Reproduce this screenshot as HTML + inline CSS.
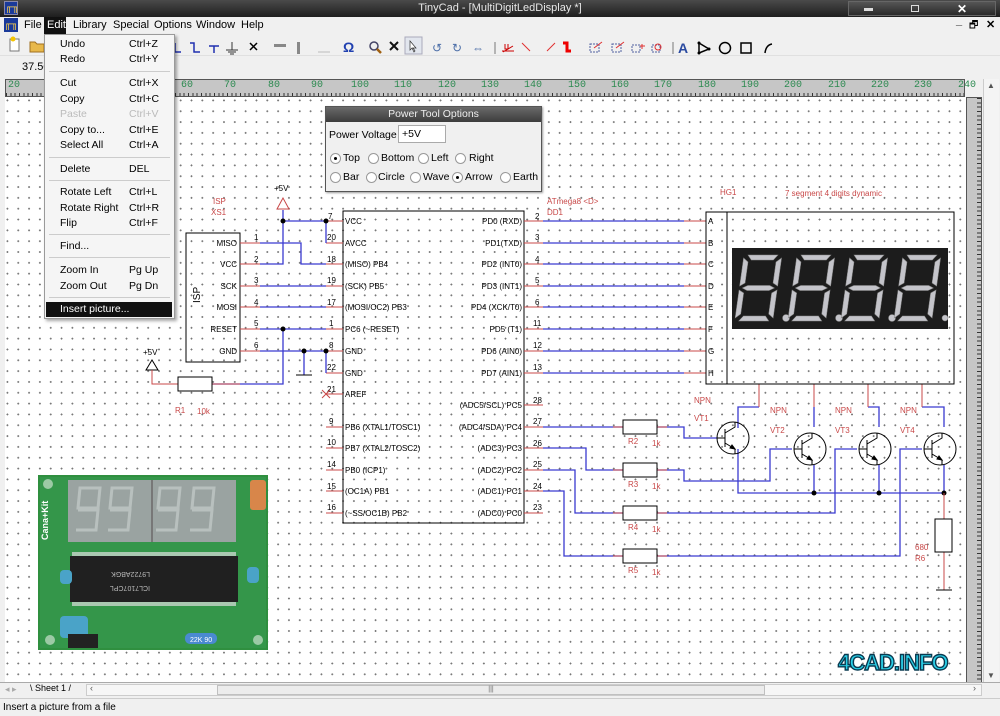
<!DOCTYPE html>
<html><head><meta charset="utf-8">
<style>
*{margin:0;padding:0;box-sizing:border-box}
body{width:1000px;height:716px;overflow:hidden;background:#f0f0f0;font-family:"Liberation Sans",sans-serif;font-size:11px;color:#000;position:relative}
.abs{position:absolute}
#title{left:0;top:0;width:1000px;height:17px;background:linear-gradient(#4a4a4a,#1e1e1e);color:#e8e8e8;text-align:center;font-size:11px;line-height:17px}
#menubar{left:0;top:17px;width:1000px;height:17px;background:#f0f0f0}
#menubar span{position:absolute;top:2px}
#toolbar{left:0;top:34px;width:1000px;height:22px;background:#f0f0f0;border-bottom:1px solid #e0e0e0}
#row2{left:0;top:56px;width:1000px;height:22px;background:#f0f0f0}
#ruler{left:5px;top:79px;width:960px;height:18px;background:#c6c6c6;border:1px solid #555;
 background-image:repeating-linear-gradient(90deg,#333 0 1px,transparent 1px 4.333px);background-size:100% 4px;background-repeat:no-repeat;background-position:0 13px}
#ruler i{position:absolute;top:0;font-style:normal;color:#2c8a50;font-size:10px;font-family:"Liberation Mono",monospace}
#vruler{left:966px;top:97px;width:16px;height:588px;background:#c6c6c6;border:1px solid #555;
 background-image:repeating-linear-gradient(180deg,#333 0 1px,transparent 1px 4.333px);background-size:5px 100%;background-repeat:no-repeat;background-position:10px 0}
#vscroll{left:983px;top:79px;width:16px;height:606px;background:#f4f4f4;border-left:1px solid #ccc}
#canvas{left:5px;top:97px;width:961px;height:585px;background-color:#fff;
 background-image:radial-gradient(circle,#777 0.8px,transparent 1px);background-size:10.833px 10.833px;background-position:-3px -2px}
#tabs{left:0;top:682px;width:1000px;height:15px;background:#f0f0f0;border-top:1px solid #aaa}
#status{left:0;top:698px;width:1000px;height:18px;background:#f0f0f0;border-top:1px solid #ccc;font-size:10px;line-height:17px;padding-left:3px}
#menu{left:44px;top:34px;width:131px;height:285px;background:#f5f5f5;border:1px solid #9a9a9a;box-shadow:2px 2px 3px rgba(0,0,0,.35)}
#menu div{position:absolute;left:15px;font-size:10.5px}
#menu b{position:absolute;left:84px;font-weight:normal;font-size:10.5px}
#menu hr{position:absolute;left:4px;width:121px;border:0;border-top:1px solid #ccc}
#dlg{left:325px;top:106px;width:217px;height:86px;background:#f0f0f0;border:1px solid #555;box-shadow:1px 1px 2px rgba(0,0,0,.4)}
#dlg .t{height:15px;background:linear-gradient(#6a6a6a,#3c3c3c);color:#eee;text-align:center;line-height:15px;font-size:10.5px}
.rb{position:absolute;width:11px;height:11px;border:1px solid #999;border-radius:50%;background:#fff}
.rb.on::after{content:"";position:absolute;left:3px;top:3px;width:3px;height:3px;background:#000;border-radius:50%}
.dl{position:absolute;font-size:10.5px}
svg text{font-family:"Liberation Sans",sans-serif}
</style></head><body>

<div id="title" class="abs">TinyCad - [MultiDigitLedDisplay *]
 <div class="abs" style="left:4px;top:1px;width:14px;height:14px;background:#1a3a9a;border:1px solid #88a;color:#ffd24a;font-size:10px;line-height:12px;font-weight:bold">╓╖</div>
 <div class="abs" style="left:848px;top:1px;width:148px;height:15px;border:1px solid #666;background:linear-gradient(#555,#2a2a2a)">
  <span class="abs" style="left:15px;top:6px;width:9px;height:3px;background:#ddd"></span>
  <span class="abs" style="left:62px;top:3px;width:8px;height:7px;border:1px solid #ddd"></span>
  <span class="abs" style="left:108px;top:-1px;color:#fff;font-weight:bold;font-size:12px">✕</span>
 </div>
</div>

<div id="menubar" class="abs">
 <div class="abs" style="left:4px;top:1px;width:14px;height:14px;background:#1a3a9a;color:#ffd24a;font-size:10px;line-height:13px;font-weight:bold;text-align:center">╓╖</div>
 <span style="left:24px">File</span>
 <span style="left:44px;top:0;width:22px;height:17px;background:#111;color:#fff;padding:2px 0 0 3px">Edit</span>
 <span style="left:73px">Library</span><span style="left:113px">Special</span><span style="left:154px">Options</span><span style="left:196px">Window</span><span style="left:241px">Help</span>
 <span style="left:956px;top:-2px;font-weight:bold">_</span>
 <span style="left:969px;top:1px;font-size:10px">🗗</span>
 <span style="left:986px;top:1px;font-weight:bold">✕</span>
</div>

<div id="toolbar" class="abs">
 <svg width="1000" height="22" style="position:absolute;left:0;top:0">
  <rect x="10" y="5" width="9" height="12" fill="#fff" stroke="#777"/><circle cx="13" cy="5" r="2.5" fill="#f5c400"/>
  <path d="M30 8h5l2 2h7v8h-14z" fill="#e8b84a" stroke="#a07020"/>
  <g stroke="#2030b0" stroke-width="1.5" fill="none">
   <path d="M175 9v9h6"/><path d="M190 9h4v9h6"/><path d="M209 12h10M214 12v7"/>
  </g>
  <path d="M232 8v8M226 16h12M228 18h8M230 20h4" stroke="#333" fill="none"/>
  <path d="M250 9l7 7M257 9l-7 7" stroke="#000" stroke-width="1.5"/>
  <rect x="274" y="10" width="12" height="3" fill="#888"/><rect x="297" y="8" width="3" height="12" fill="#888"/>
  <path d="M318 18h12" stroke="#bbb"/>
  <text x="343" y="18" font-size="14" font-weight="bold" fill="#2040b0">Ω</text>
  <circle cx="374" cy="12" r="4" fill="none" stroke="#446" stroke-width="1.5"/><path d="M377 15l4 4" stroke="#a06010" stroke-width="2.5"/>
  <path d="M390 8l8 8M398 8l-8 8" stroke="#111" stroke-width="2"/>
  <rect x="405" y="3" width="17" height="17" fill="#e2e6ee" stroke="#aab"/><path d="M410 7v9l2-2 2 4 1-1-2-3h3z" fill="#fff" stroke="#333" stroke-width=".7"/>
  <text x="432" y="18" font-size="12" fill="#4d6fa8">↺</text><text x="452" y="18" font-size="12" fill="#4d6fa8">↻</text><text x="472" y="18" font-size="12" fill="#4d6fa8">⇔</text>
  <path d="M495 8v12" stroke="#777"/>
  <path d="M502 17h12M505 10v5h3v-5" stroke="#c00" fill="none"/><path d="M503 18l10-6" stroke="#c00"/>
  <path d="M522 9l8 8M547 17l8-8" stroke="#e03030"/>
  <path d="M563 9h4v8h4" stroke="#e00" stroke-width="3" fill="none"/>
  <g stroke="#5060a0" fill="none" stroke-dasharray="2 1"><rect x="590" y="10" width="9" height="8"/><rect x="612" y="10" width="9" height="8"/><rect x="632" y="11" width="8" height="7"/><rect x="652" y="11" width="8" height="7"/></g>
  <path d="M594 14l8-6M616 14l8-6M640 12h5M642 10v5" stroke="#e03030"/><circle cx="658" cy="13" r="3" fill="none" stroke="#e03030"/>
  <path d="M673 8v12" stroke="#777"/>
  <text x="678" y="19" font-size="14" font-weight="bold" fill="#2a4aa0" font-family="Liberation Serif">A</text>
  <path d="M699 9l10 6-10 4z" fill="none" stroke="#000" stroke-width="1.5"/><circle cx="699" cy="9" r="1.5"/><circle cx="709" cy="15" r="1.5"/><circle cx="699" cy="19" r="1.5"/>
  <circle cx="725" cy="14" r="5.5" fill="none" stroke="#000" stroke-width="1.5"/>
  <rect x="741" y="9" width="10" height="10" fill="none" stroke="#000" stroke-width="1.5"/>
  <path d="M765 19q1-8 7-9" stroke="#000" stroke-width="1.5" fill="none"/>
 </svg>
</div>

<div id="row2" class="abs"><span class="abs" style="left:22px;top:5px;font-size:11px">37.50</span></div>

<div id="ruler" class="abs">
 <i style="left:2px">20</i><i style="left:45px">30</i><i style="left:88px">40</i><i style="left:132px">50</i><i style="left:175px">60</i><i style="left:218px">70</i><i style="left:262px">80</i><i style="left:305px">90</i><i style="left:345px">100</i><i style="left:388px">110</i><i style="left:432px">120</i><i style="left:475px">130</i><i style="left:518px">140</i><i style="left:562px">150</i><i style="left:605px">160</i><i style="left:648px">170</i><i style="left:692px">180</i><i style="left:735px">190</i><i style="left:778px">200</i><i style="left:822px">210</i><i style="left:865px">220</i><i style="left:908px">230</i><i style="left:952px">240</i>
</div>
<div id="vruler" class="abs"></div>
<div id="vscroll" class="abs"><span class="abs" style="left:3px;top:2px;font-size:8px;color:#555">▲</span><span class="abs" style="left:3px;top:592px;font-size:8px;color:#555">▼</span></div>

<div id="canvas" class="abs"></div>

<svg class="abs" style="left:0;top:0" width="1000" height="716">
 <g>
  <rect x="38" y="475" width="230" height="175" fill="#2f8f3f"/>
  <rect x="40" y="477" width="226" height="171" fill="#34964a"/>
  <rect x="68" y="480" width="168" height="62" fill="#9aa3a1"/>
  <path d="M152 480v62" stroke="#777" stroke-width="2"/>
  <g fill="none" stroke="#b8c0be" stroke-width="3">
   <path d="M80 488h20l-2 20h-20zM78 510h20l-2 20h-20"/><path d="M112 488h20l-2 20h-20zM110 510h20l-2 20h-20"/>
   <path d="M160 488h20l-2 20h-20zM158 510h20l-2 20h-20"/><path d="M194 488h20l-2 20h-20zM192 510h20l-2 20h-20"/>
  </g>
  <rect x="70" y="556" width="168" height="46" fill="#202020"/>
  <g fill="#ddd"><rect x="72" y="552" width="164" height="4" opacity=".7"/><rect x="72" y="602" width="164" height="4" opacity=".7"/></g>
  <text x="150" y="576" font-size="7" fill="#bbb" transform="rotate(180 150 574)">L9722ABGK</text>
  <text x="150" y="590" font-size="7" fill="#bbb" transform="rotate(180 150 588)">ICL7107CPL</text>
  <rect x="250" y="480" width="16" height="30" rx="3" fill="#d8864a"/>
  <rect x="60" y="570" width="12" height="14" rx="4" fill="#4aa3c8"/><rect x="247" y="567" width="12" height="16" rx="4" fill="#4aa3c8"/>
  <rect x="60" y="616" width="28" height="22" rx="4" fill="#4aa3c8"/><rect x="68" y="634" width="30" height="14" fill="#222"/>
  <rect x="185" y="633" width="32" height="11" rx="5" fill="#4a8ad0"/><text x="190" y="642" font-size="7" fill="#fff">22K 90</text>
  <text x="48" y="540" font-size="9" font-weight="bold" fill="#fff" transform="rotate(-90 48 540)">Cana+Kit</text>
  <circle cx="48" cy="484" r="5" fill="#9ccaa5"/><circle cx="258" cy="640" r="5" fill="#9ccaa5"/><circle cx="50" cy="640" r="5" fill="#9ccaa5"/>
 </g>

 <g font-size="8">
  <rect x="186" y="233" width="54" height="129" fill="none" stroke="#000"/>
  <text x="198" y="305" font-size="10" transform="rotate(-90 198 303)">ISP</text>
  <g text-anchor="end">
   <text x="237" y="246">MISO</text><text x="237" y="267">VCC</text><text x="237" y="289">SCK</text><text x="237" y="310">MOSI</text><text x="237" y="332">RESET</text><text x="237" y="354">GND</text>
  </g>
  <g stroke="#c84848"><path d="M240 243h20M240 264h20M240 286h20M240 307h20M240 329h20M240 351h20"/></g>
  <g><text x="254" y="240">1</text><text x="254" y="262">2</text><text x="254" y="283">3</text><text x="254" y="305">4</text><text x="254" y="326">5</text><text x="254" y="348">6</text></g>
  <text x="213" y="204" fill="#c84848">ISP</text><text x="211" y="215" fill="#c84848">XS1</text>

  <rect x="343" y="211" width="181" height="312" fill="none" stroke="#000"/>
  <g stroke="#c84848">
   <path d="M326 221h17M326 243h17M326 264h17M326 286h17M326 307h17M326 329h17M326 351h17M326 373h17M326 394h17M326 427h17M326 448h17M326 470h17M326 491h17M326 513h17"/>
   <path d="M524 221h19M524 243h19M524 264h19M524 286h19M524 307h19M524 329h19M524 351h19M524 373h19M524 405h19M524 427h19M524 448h19M524 470h19M524 491h19M524 513h19"/>
  </g>
  <g>
   <text x="328" y="219">7</text><text x="327" y="240">20</text><text x="327" y="262">18</text><text x="327" y="283">19</text><text x="327" y="305">17</text><text x="329" y="326">1</text><text x="329" y="348">8</text><text x="327" y="370">22</text><text x="327" y="392">21</text><text x="329" y="424">9</text><text x="327" y="445">10</text><text x="327" y="467">14</text><text x="327" y="489">15</text><text x="327" y="510">16</text>
   <text x="535" y="219">2</text><text x="535" y="240">3</text><text x="535" y="262">4</text><text x="535" y="283">5</text><text x="535" y="305">6</text><text x="533" y="326">11</text><text x="533" y="348">12</text><text x="533" y="370">13</text><text x="533" y="403">28</text><text x="533" y="424">27</text><text x="533" y="446">26</text><text x="533" y="467">25</text><text x="533" y="489">24</text><text x="533" y="510">23</text>
  </g>
  <g>
   <text x="345" y="224">VCC</text><text x="345" y="246">AVCC</text><text x="345" y="267">(MISO) PB4</text><text x="345" y="289">(SCK) PB5</text><text x="345" y="310">(MOSI/OC2) PB3</text><text x="345" y="332">PC6 (~RESET)</text><text x="345" y="354">GND</text><text x="345" y="376">GND</text><text x="345" y="397">AREF</text><text x="345" y="430">PB6 (XTAL1/TOSC1)</text><text x="345" y="451">PB7 (XTAL2/TOSC2)</text><text x="345" y="473">PB0 (ICP1)</text><text x="345" y="494">(OC1A) PB1</text><text x="345" y="516">(~SS/OC1B) PB2</text>
  </g>
  <g text-anchor="end">
   <text x="522" y="224">PD0 (RXD)</text><text x="522" y="246">PD1(TXD)</text><text x="522" y="267">PD2 (INT0)</text><text x="522" y="289">PD3 (INT1)</text><text x="522" y="310">PD4 (XCK/T0)</text><text x="522" y="332">PD5 (T1)</text><text x="522" y="354">PD6 (AIN0)</text><text x="522" y="376">PD7 (AIN1)</text><text x="522" y="408">(ADC5/SCL) PC5</text><text x="522" y="430">(ADC4/SDA) PC4</text><text x="522" y="451">(ADC3) PC3</text><text x="522" y="473">(ADC2) PC2</text><text x="522" y="494">(ADC1) PC1</text><text x="522" y="516">(ADC0) PC0</text>
  </g>
  <text x="547" y="204" fill="#c84848">ATmega8 &lt;D&gt;</text><text x="547" y="215" fill="#c84848">DD1</text>
  <path d="M322 390l8 8M330 390l-8 8" stroke="#c84848"/>

  <text x="274" y="191">+5V</text><path d="M283 198l-6 11h12z" fill="#fff" stroke="#c84848"/>
  <text x="143" y="355">+5V</text><path d="M152 360l-6 10h12z" fill="#fff" stroke="#000"/>
  <g stroke="#3a3ad0" fill="none" stroke-width="1.3">
   <path d="M283 210v54h-23M283 221h43v22"/>
   <path d="M260 243h41v21h25"/>
   <path d="M260 286h66M260 307h66M260 329h66M283 329v55h-71"/>
   <path d="M260 351h66v22M304 351v24"/>
   <path d="M543 221h141M543 243h141M543 264h141M543 286h141M543 307h141M543 329h141M543 351h141M543 373h141"/>
   <path d="M543 427h80M543 448h43v22h37M543 470h32v43h48M543 491h21v65h59"/>
   <path d="M657 427h27v11h33M657 470h27v11h86v-32h22M657 513h178v-64h22M657 556h243v-107h22"/>
   <path d="M738 428v-21h21M814 407v20M868 407h11v20M922 407h22v20"/>
   <path d="M738 449v44h206M814 465v28M879 465v28M944 465v28"/>
  </g>
  <path d="M152 370v14h26M212 384h28" stroke="#c84848" fill="none"/>
  <rect x="178" y="377" width="34" height="14" fill="#fff" stroke="#000"/>
  <text x="175" y="413" fill="#c84848">R1</text><text x="197" y="414" fill="#c84848">10k</text>
  <path d="M296 375h16" stroke="#000"/>
  <g fill="#000"><circle cx="283" cy="221" r="2.5"/><circle cx="326" cy="221" r="2.5"/><circle cx="283" cy="329" r="2.5"/><circle cx="304" cy="351" r="2.5"/><circle cx="326" cy="351" r="2.5"/><circle cx="814" cy="493" r="2.5"/><circle cx="879" cy="493" r="2.5"/><circle cx="944" cy="493" r="2.5"/></g>

  <g stroke="#c84848"><path d="M684 221h22M684 243h22M684 264h22M684 286h22M684 307h22M684 329h22M684 351h22M684 373h22"/>
  <path d="M759 384v23M814 384v23M868 384v23M922 384v23"/><path d="M944 493v26M944 552v38"/></g>
  <rect x="706" y="212" width="248" height="172" fill="none" stroke="#000"/>
  <path d="M727 212v172" stroke="#000"/>
  <g><text x="708" y="224">A</text><text x="708" y="246">B</text><text x="708" y="267">C</text><text x="708" y="289">D</text><text x="708" y="310">E</text><text x="708" y="332">F</text><text x="708" y="354">G</text><text x="708" y="376">H</text></g>
  <text x="720" y="195" fill="#c84848">HG1</text><text x="785" y="196" fill="#c84848">7 segment 4 digits dynamic</text>
  <rect x="732" y="248" width="216" height="81" fill="#1c1c1c"/>
  <g fill="#c4c4ca" stroke="#888" stroke-width=".5">
   <g id="dg" transform="translate(744 255) skewX(-8)">
    <polygon points="4,0 34,0 30,5 8,5"/>
    <polygon points="0,3 5,7 5,28 0,31"/>
    <polygon points="38,3 33,7 33,28 38,31"/>
    <polygon points="3,33 8,30.5 30,30.5 35,33 30,35.5 8,35.5"/>
    <polygon points="0,35 5,38 5,59 0,63"/>
    <polygon points="38,35 33,38 33,59 38,63"/>
    <polygon points="8,61 30,61 34,66 4,66"/>
   </g>
   <circle cx="786" cy="318" r="3.5"/>
   <use href="#dg" x="53"/><circle cx="839" cy="318" r="3.5"/>
   <use href="#dg" x="106"/><circle cx="892" cy="318" r="3.5"/>
   <use href="#dg" x="159"/><circle cx="945" cy="318" r="3"/>
  </g>

  <g stroke="#c84848"><path d="M613 427h10M657 427h10M613 470h10M657 470h10M613 513h10M657 513h10M613 556h10M657 556h10"/></g>
  <g fill="#fff" stroke="#000"><rect x="623" y="420" width="34" height="14"/><rect x="623" y="463" width="34" height="14"/><rect x="623" y="506" width="34" height="14"/><rect x="623" y="549" width="34" height="14"/><rect x="935" y="519" width="17" height="33"/></g>
  <g fill="#c84848"><text x="628" y="444">R2</text><text x="652" y="446">1k</text><text x="628" y="487">R3</text><text x="652" y="489">1k</text><text x="628" y="530">R4</text><text x="652" y="532">1k</text><text x="628" y="573">R5</text><text x="652" y="575">1k</text><text x="915" y="550">680</text><text x="915" y="561">R6</text>
   <text x="694" y="403">NPN</text><text x="694" y="421">VT1</text><text x="770" y="413">NPN</text><text x="770" y="433">VT2</text><text x="835" y="413">NPN</text><text x="835" y="433">VT3</text><text x="900" y="413">NPN</text><text x="900" y="433">VT4</text></g>
  <path d="M936 590h16" stroke="#000"/>
  <g fill="none" stroke="#000">
   <g id="tr"><circle cx="733" cy="438" r="16"/><path d="M725 429v18M717 438h8M725 433l10-6v-5M725 443l10 6v5"/><path d="M735 449l-5-1 2-3z" fill="#000"/></g>
   <use href="#tr" x="77" y="11"/><use href="#tr" x="142" y="11"/><use href="#tr" x="207" y="11"/>
  </g>
 </g>

 <text x="838" y="670" font-size="22" font-weight="bold" fill="#2bd0e8" stroke="#0a3a50" stroke-width="1.4" letter-spacing="-1" font-family="Liberation Sans">4CAD.INFO</text>
</svg>

<div id="dlg" class="abs">
 <div class="t">Power Tool Options</div>
 <span class="dl" style="left:3px;top:22px">Power Voltage</span>
 <div class="abs" style="left:72px;top:18px;width:48px;height:18px;background:#fff;border:1px solid #aaa;padding:2px 3px;font-size:10.5px">+5V</div>
 <span class="rb on" style="left:4px;top:46px"></span><span class="dl" style="left:17px;top:45px">Top</span>
 <span class="rb" style="left:42px;top:46px"></span><span class="dl" style="left:55px;top:45px">Bottom</span>
 <span class="rb" style="left:92px;top:46px"></span><span class="dl" style="left:105px;top:45px">Left</span>
 <span class="rb" style="left:129px;top:46px"></span><span class="dl" style="left:143px;top:45px">Right</span>
 <span class="rb" style="left:4px;top:65px"></span><span class="dl" style="left:17px;top:64px">Bar</span>
 <span class="rb" style="left:40px;top:65px"></span><span class="dl" style="left:52px;top:64px">Circle</span>
 <span class="rb" style="left:84px;top:65px"></span><span class="dl" style="left:97px;top:64px">Wave</span>
 <span class="rb on" style="left:126px;top:65px"></span><span class="dl" style="left:139px;top:64px">Arrow</span>
 <span class="rb" style="left:174px;top:65px"></span><span class="dl" style="left:187px;top:64px">Earth</span>
</div>

<div id="menu" class="abs">
 <div style="top:3px">Undo</div><b style="top:3px">Ctrl+Z</b>
 <div style="top:18px">Redo</div><b style="top:18px">Ctrl+Y</b>
 <hr style="top:36px">
 <div style="top:42px">Cut</div><b style="top:42px">Ctrl+X</b>
 <div style="top:58px">Copy</div><b style="top:58px">Ctrl+C</b>
 <div style="top:73px;color:#bbb">Paste</div><b style="top:73px;color:#bbb">Ctrl+V</b>
 <div style="top:89px">Copy to...</div><b style="top:89px">Ctrl+E</b>
 <div style="top:104px">Select All</div><b style="top:104px">Ctrl+A</b>
 <hr style="top:122px">
 <div style="top:128px">Delete</div><b style="top:128px">DEL</b>
 <hr style="top:145px">
 <div style="top:151px">Rotate Left</div><b style="top:151px">Ctrl+L</b>
 <div style="top:167px">Rotate Right</div><b style="top:167px">Ctrl+R</b>
 <div style="top:182px">Flip</div><b style="top:182px">Ctrl+F</b>
 <hr style="top:199px">
 <div style="top:205px">Find...</div>
 <hr style="top:222px">
 <div style="top:229px">Zoom In</div><b style="top:229px">Pg Up</b>
 <div style="top:245px">Zoom Out</div><b style="top:245px">Pg Dn</b>
 <hr style="top:262px">
 <span class="abs" style="left:1px;top:267px;width:126px;height:15px;background:#111"></span>
 <div style="top:268px;color:#fff">Insert picture...</div>
</div>

<div id="tabs" class="abs">
 <span class="abs" style="left:5px;top:1px;color:#aaa;font-size:9px">◂ ▸</span>
 <span class="abs" style="left:30px;top:0;font-size:9px">\ Sheet 1 /</span>
 <div class="abs" style="left:86px;top:1px;width:896px;height:12px;background:#f6f6f6;border:1px solid #ccc">
  <span class="abs" style="left:3px;top:-2px;font-size:9px;color:#555">‹</span>
  <div class="abs" style="left:130px;top:0;width:548px;height:10px;background:#ececec;border:1px solid #c0c0c0;font-size:7px;text-align:center;color:#666">|||</div>
  <span class="abs" style="left:886px;top:-2px;font-size:9px;color:#555">›</span>
 </div>
</div>
<div id="status" class="abs">Insert a picture from a file</div>
</body></html>
